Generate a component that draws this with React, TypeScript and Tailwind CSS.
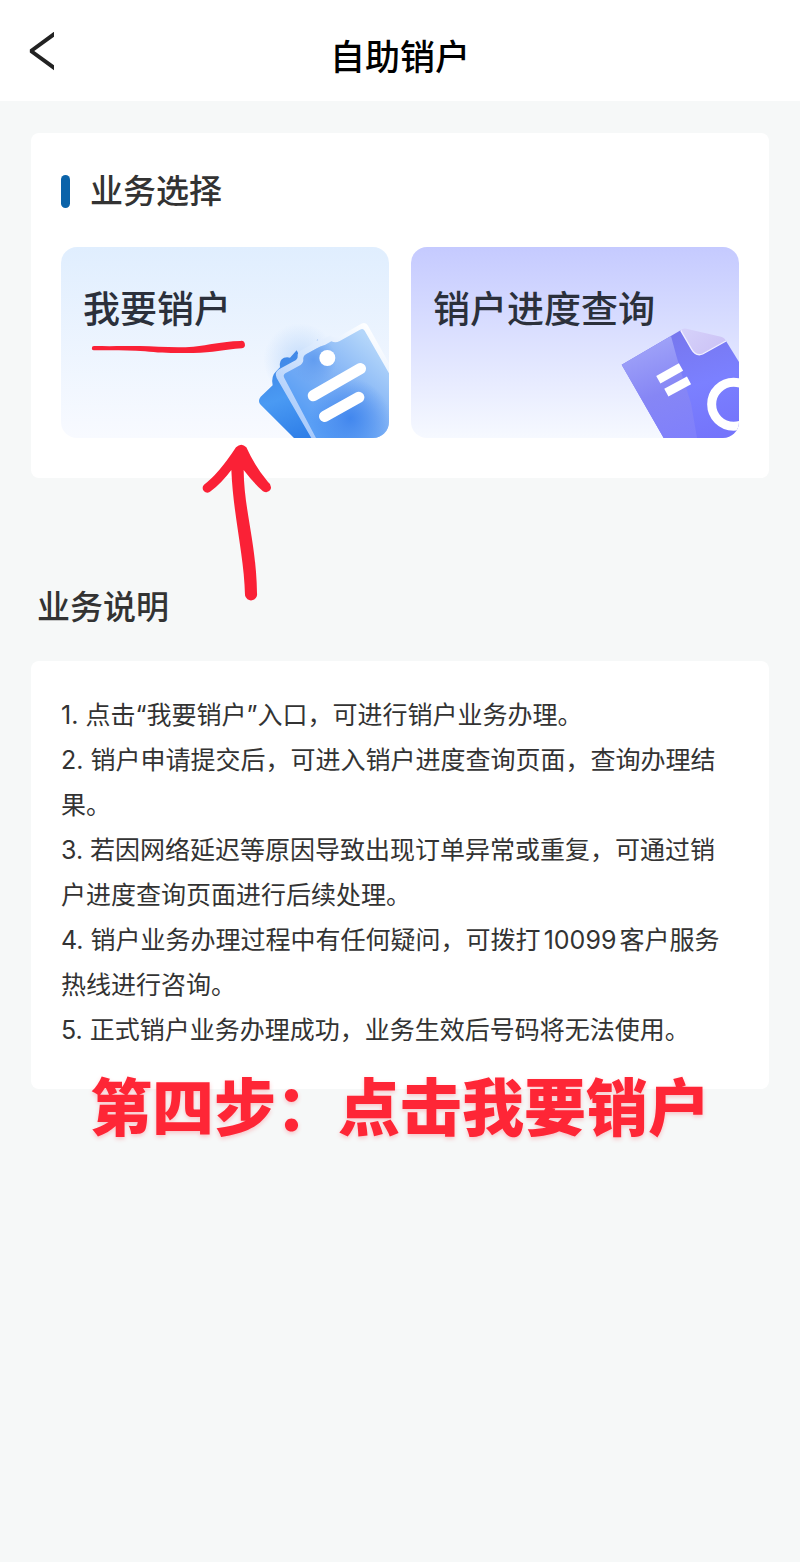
import type { ReactNode } from "react";

const notes = [
  "1. 点击“我要销户”入口，可进行销户业务办理。",
  "2. 销户申请提交后，可进入销户进度查询页面，查询办理结果。",
  "3. 若因网络延迟等原因导致出现订单异常或重复，可通过销户进度查询页面进行后续处理。",
  "4. 销户业务办理过程中有任何疑问，可拨打10099客户服务热线进行咨询。",
  "5. 正式销户业务办理成功，业务生效后号码将无法使用。",
];

function ClipboardArt() {
  return (
    <svg
      className="absolute right-0 bottom-0 w-[139px] h-32 overflow-visible"
      viewBox="0 0 417 384"
      fill="none"
      aria-hidden="true"
    >
      <defs>
        <linearGradient id="clipBack" x1="60" y1="140" x2="150" y2="384" gradientUnits="userSpaceOnUse">
          <stop stopColor="#3f86e6" />
          <stop offset="0.5" stopColor="#4a9af3" />
          <stop offset="1" stopColor="#2f7fe8" />
        </linearGradient>
        <linearGradient id="clipFront" x1="190" y1="330" x2="385" y2="110" gradientUnits="userSpaceOnUse">
          <stop stopColor="#5a9ff5" />
          <stop offset="0.45" stopColor="#7fb1f5" />
          <stop offset="1" stopColor="#b4d6fa" />
        </linearGradient>
        <linearGradient id="clipEdge" x1="110" y1="340" x2="350" y2="40" gradientUnits="userSpaceOnUse">
          <stop stopColor="#a5c8fb" />
          <stop offset="0.5" stopColor="#d3e5fd" />
          <stop offset="1" stopColor="#ffffff" />
        </linearGradient>
        <radialGradient id="clipGlow" cx="300" cy="325" r="120" gradientUnits="userSpaceOnUse">
          <stop stopColor="#4287ee" />
          <stop offset="1" stopColor="#4287ee" stopOpacity="0" />
        </radialGradient>
        <radialGradient id="clipShade" cx="190" cy="150" r="70" gradientUnits="userSpaceOnUse">
          <stop stopColor="#629df0" />
          <stop offset="1" stopColor="#629df0" stopOpacity="0" />
        </radialGradient>
        <radialGradient id="clipHalo" cx="150" cy="150" r="110" gradientUnits="userSpaceOnUse">
          <stop stopColor="#c4dcfb" />
          <stop offset="1" stopColor="#c4dcfb" stopOpacity="0" />
        </radialGradient>
      </defs>
      <circle cx="150" cy="150" r="110" fill="url(#clipHalo)" />
      <path
        d="M132 384 L32 284 Q22 273 32 260 L68 226 Q62 198 80 182 L90 172 Q86 150 102 143 Q112 141 120 143 L140 121 L160 160 L210 384 Z"
        fill="url(#clipBack)"
      />
      <path d="M195 101 L203 87 L209 100 Z" fill="#9dc0f5" />
      <path
        d="M184 384 L80 204 Q72 187 87 178 L138 150 Q144 146 143 138 Q141 128 156 119 L184 104 Q190 95 204 91 Q208 88 214 91 L240 76 Q254 87 266 80 L334 41 Q347 35 354 47 L417 160 V384 Z"
        fill="url(#clipEdge)"
      />
      <path
        d="M198 384 L103 204 Q98 195 106 190 L152 165 Q162 157 160 145 Q160 138 168 133 L198 116 Q210 108 226 104 L244 94 Q256 100 268 94 L330 59 Q339 54 344 62 L417 190 V384 Z"
        fill="url(#clipFront)"
      />
      <path
        d="M198 384 L103 204 Q98 195 106 190 L152 165 Q162 157 160 145 Q160 138 168 133 L198 116 Q210 108 226 104 L244 94 L300 300 Z"
        fill="url(#clipShade)"
      />
      <path d="M198 384 L140 274 L230 190 H417 V384 Z" fill="url(#clipGlow)" />
      <circle cx="232" cy="144" r="24" fill="#fff" />
      <path d="M190 257 L331 176" stroke="#fff" strokeWidth="34" strokeLinecap="round" />
      <path d="M224 319 L326 262" stroke="#fff" strokeWidth="34" strokeLinecap="round" />
    </svg>
  );
}

function DocumentArt() {
  return (
    <svg
      className="absolute right-0 bottom-0 w-32 h-[118px]"
      viewBox="0 0 384 354"
      fill="none"
      aria-hidden="true"
    >
      <defs>
        <linearGradient id="docLeft" x1="110" y1="80" x2="210" y2="354" gradientUnits="userSpaceOnUse">
          <stop stopColor="#9da0f8" />
          <stop offset="0.5" stopColor="#8686f5" />
          <stop offset="1" stopColor="#8080fb" />
        </linearGradient>
        <linearGradient id="docRight" x1="200" y1="40" x2="300" y2="354" gradientUnits="userSpaceOnUse">
          <stop stopColor="#7777ee" />
          <stop offset="0.5" stopColor="#7b80ff" />
          <stop offset="1" stopColor="#7474fb" />
        </linearGradient>
        <linearGradient id="docFold" x1="220" y1="30" x2="290" y2="110" gradientUnits="userSpaceOnUse">
          <stop stopColor="#d5d1fa" />
          <stop offset="1" stopColor="#cdc4f6" />
        </linearGradient>
      </defs>
      <path d="M32 134 L209 31 L345 63 L384 126 V354 H158 Z" fill="url(#docRight)" />
      <path d="M32 134 L180 48 Q196 110 214 168 L240 250 L258 354 H158 Z" fill="url(#docLeft)" />
      <path d="M209 31 Q215 24 226 26 L330 50 Q342 54 345 63 L275 102 Q256 110 244 92 Z" fill="url(#docFold)" />
      <path d="M209 31 L242 88 Q255 110 275 102 L345 63" stroke="#f1efff" strokeWidth="4" />
      <path d="M142 179 L210 141" stroke="#fff" strokeWidth="26" />
      <path d="M166 218 L234 181" stroke="#fff" strokeWidth="26" />
      <circle cx="368" cy="253" r="66" stroke="#fff" strokeWidth="27" />
    </svg>
  );
}

function UnderlineMark() {
  return (
    <svg
      className="absolute left-[29px] top-[92px] w-[157px] h-4"
      viewBox="0 0 471 48"
      fill="#fa2136"
      aria-hidden="true"
    >
      <path d="M12 21 C60 22 100 21 150 21 C200 21 250 28 310 23 C360 18 390 8 451 6 A11 11 0 0 1 456 28 C400 31 370 42 310 42 C250 43 210 42 165 37 C110 33 60 34 12 34 A6 6 0 0 1 12 21 Z" />
    </svg>
  );
}

function ArrowMark() {
  return (
    <svg
      className="absolute left-[159px] top-[297px] w-[100px] h-[180px] pointer-events-none"
      viewBox="0 0 300 540"
      fill="#fa2136"
      aria-hidden="true"
    >
      <path d="M124 120 Q94 160 62 184 A13 13 0 0 1 42 164 Q84 134 138 52 Q154 37 169 52 Q194 108 234 156 Q246 164 242 178 Q234 192 219 184 Q190 158 161 120 C162 240 199 340 201 490 A18 18 0 0 1 165 496 C163 380 130 260 124 120 Z" />
    </svg>
  );
}

interface TileProps {
  title: string;
  className: string;
  children: ReactNode;
}

function Tile({ title, className, children }: TileProps) {
  return (
    <button
      type="button"
      className={`relative flex h-[191px] items-start overflow-hidden rounded-2xl bg-linear-to-b pt-[41px] pl-[22px] text-left ${className}`}
    >
      {children}
      <span className="relative text-[37px] leading-[44px] font-medium text-[#2b303b]">{title}</span>
    </button>
  );
}

export default function App() {
  return (
    <div
      className="min-h-screen bg-[#f6f8f8] font-['Inter','Noto_Sans_CJK_SC',sans-serif] text-[#333333] [text-autospace:normal]"
      lang="zh-CN"
    >
      <header className="relative flex h-[101px] items-center justify-center bg-white pt-3">
        <button type="button" aria-label="返回" className="absolute left-7 top-8 text-[#222222]">
          <svg className="w-[26px] h-10" viewBox="0 0 26 40" fill="none" aria-hidden="true">
            <path d="M29 0 L3 19 L29 38" stroke="currentColor" strokeWidth="4" strokeLinejoin="bevel" />
          </svg>
        </button>
        <h1 className="text-[35px] leading-[44px] font-medium text-black">自助销户</h1>
      </header>

      <main className="px-[31px] pt-8">
        <section className="relative rounded-lg bg-white px-[30px] pt-9 pb-10">
          <div className="flex items-center gap-5">
            <span className="h-[33px] w-[9px] rounded-full bg-[#0b63a9]" />
            <h2 className="text-[33px] leading-[44px] font-medium">业务选择</h2>
          </div>
          <div className="mt-[34px] grid grid-cols-2 gap-[22px]">
            <Tile title="我要销户" className="from-[#e0eefe] to-[#f8faff]">
              <ClipboardArt />
              <UnderlineMark />
            </Tile>
            <Tile title="销户进度查询" className="from-[#c5caff] to-[#f6f9ff]">
              <DocumentArt />
            </Tile>
          </div>
          <ArrowMark />
        </section>

        <h2 className="mt-[107px] pl-[6px] text-[33px] leading-[44px] font-medium">业务说明</h2>

        <section className="relative mt-8 rounded-lg bg-white px-[30px] pt-8 pb-9">
          <ol className="text-[25px] leading-[45px]">
            {notes.map((note) => (
              <li key={note}>{note}</li>
            ))}
          </ol>
          <p className="absolute inset-x-0 -bottom-14 text-center text-[62px] leading-[72px] font-black whitespace-nowrap text-[#fe2636] [text-shadow:0_2px_4px_rgba(254,38,54,0.25)]">
            第四步：点击我要销户
          </p>
        </section>
      </main>
    </div>
  );
}
